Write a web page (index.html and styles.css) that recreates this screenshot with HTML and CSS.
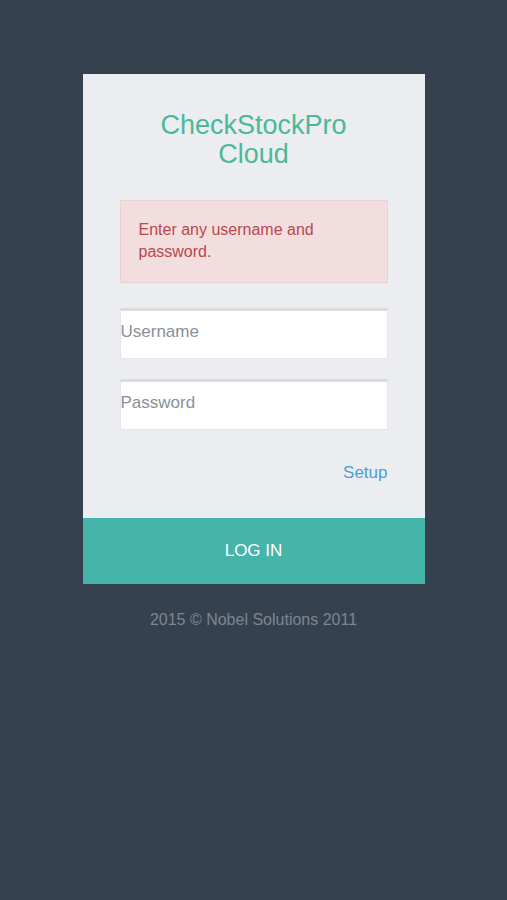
FILE: index.html
```html
<!DOCTYPE html>
<html>
<head>
<meta charset="utf-8">
<link rel="stylesheet" href="styles.css">
</head>
<body>
<div class="page">
  <div class="card">
    <div class="card-body">
      <h1 class="title">CheckStockPro<br>Cloud</h1>
      <div class="alert">Enter any username and password.</div>
      <div class="field"><input type="text" placeholder="Username"></div>
      <div class="field"><input type="password" placeholder="Password"></div>
      <div class="links"><a class="setup" href="#">Setup</a></div>
    </div>
    <button class="login">LOG IN</button>
  </div>
  <p class="footer">2015 © Nobel Solutions 2011</p>
</div>
</body>
</html>
```
FILE: styles.css
```css
html, body {
  margin: 0;
  padding: 0;
  background: #36414f;
  font-family: "Liberation Sans", Arial, sans-serif;
}
.page {
  display: flex;
  flex-direction: column;
  align-items: center;
  padding-top: 74px;
}
.card {
  width: 342px;
  background: #ebedf0;
  display: flex;
  flex-direction: column;
}
.card-body {
  padding: 37px 37px 0 37px;
  display: flex;
  flex-direction: column;
}
.title {
  margin: 0;
  font-weight: normal;
  font-size: 27px;
  line-height: 29px;
  color: #4cb89a;
  text-align: center;
}
.alert {
  margin-top: 31px;
  background: #f2dede;
  border: 1px solid #ecd0d2;
  color: #b9484a;
  font-size: 16px;
  line-height: 22px;
  padding: 18px 40px 19px 18px;
}
.field {
  margin-top: 25px;
}
.field + .field {
  margin-top: 20px;
}
.field input {
  display: block;
  box-sizing: border-box;
  width: 100%;
  height: 51px;
  border: 1px solid #e4e6e8;
  border-top: 3px solid #d9dbdd;
  background: #fff;
  padding: 0 0 6px 0;
  font-family: "Liberation Sans", Arial, sans-serif;
  font-size: 17px;
  color: #333;
  outline: none;
}
.field input::placeholder {
  color: #8a8f98;
}
.links {
  display: flex;
  justify-content: flex-end;
  padding-top: 33px;
  padding-bottom: 36px;
}
.setup {
  color: #4f9dd4;
  text-decoration: none;
  font-size: 17px;
  line-height: 19px;
}
.login {
  display: block;
  width: 100%;
  height: 66px;
  border: none;
  background: #45b5aa;
  color: #fff;
  font-family: "Liberation Sans", Arial, sans-serif;
  font-size: 17px;
  padding: 0;
  cursor: pointer;
}
.footer {
  margin: 27px 0 0 0;
  color: #7c8591;
  font-size: 16px;
  line-height: 18px;
}
```
